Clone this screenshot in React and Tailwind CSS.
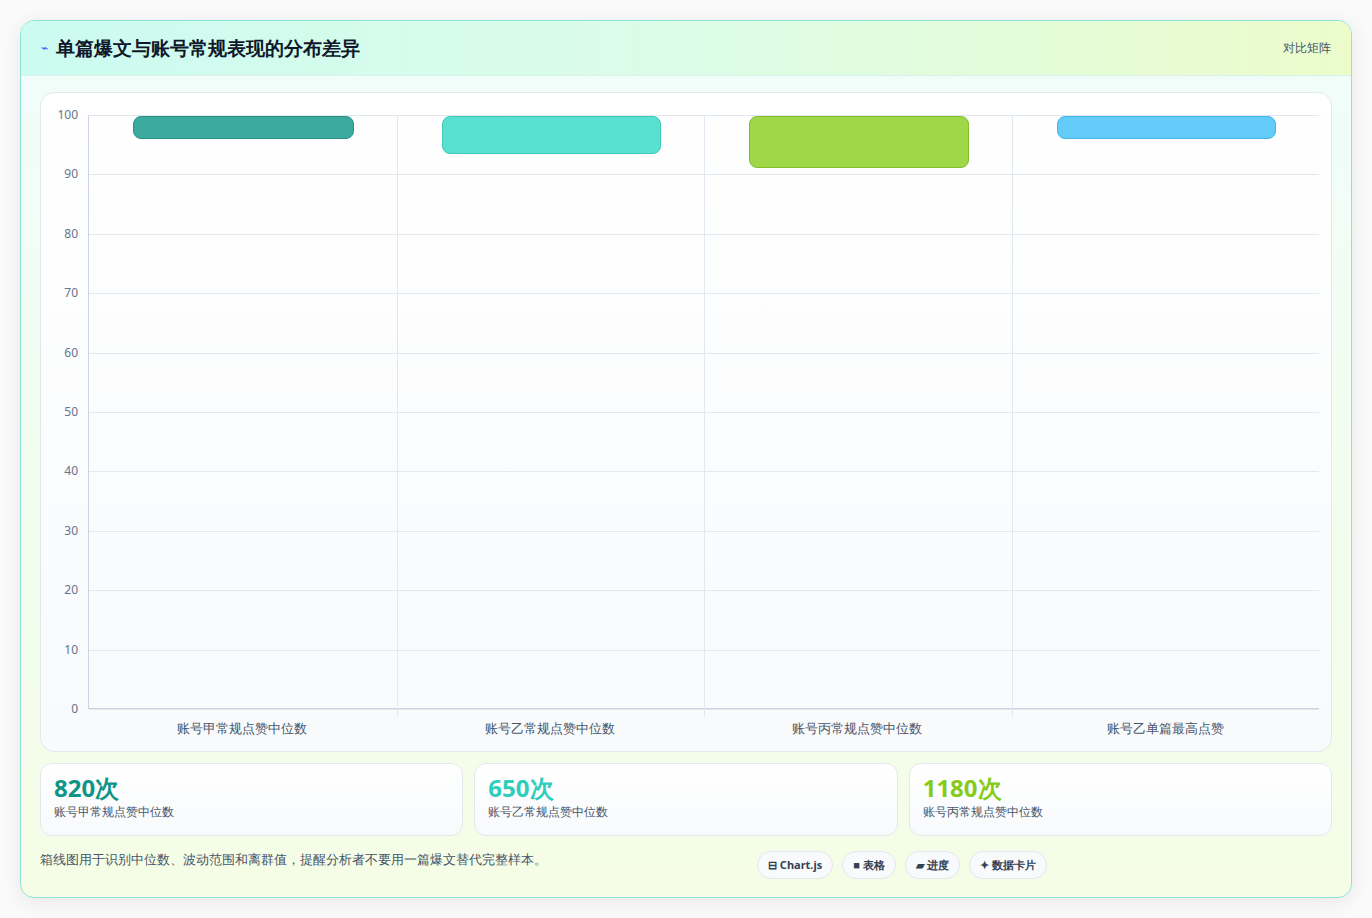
export default function App() {
  const ticks = [100, 90, 80, 70, 60, 50, 40, 30, 20, 10, 0];
  const bars = [
    { label: "账号甲常规点赞中位数", h: 23, bg: "bg-[#3daaa0]", bd: "border-[#2a8f86]" },
    { label: "账号乙常规点赞中位数", h: 38, bg: "bg-[#5ae0d0]", bd: "border-[#3cc9b8]" },
    { label: "账号丙常规点赞中位数", h: 52, bg: "bg-[#9ed848]", bd: "border-[#82be2c]" },
    { label: "账号乙单篇最高点赞", h: 23, bg: "bg-[#62cbf8]", bd: "border-[#45b5e8]" },
  ];
  const stats = [
    { v: "820次", l: "账号甲常规点赞中位数", c: "text-[#0f9488]" },
    { v: "650次", l: "账号乙常规点赞中位数", c: "text-[#2fcdbb]" },
    { v: "1180次", l: "账号丙常规点赞中位数", c: "text-[#84cc16]" },
  ];
  return (
    <div className="w-[1372px] h-[918px] bg-[#fafafa] pt-[20px] pl-[20px] font-['Noto_Sans_CJK_SC',sans-serif]">
      <div className="w-[1332px] h-[878px] rounded-[14px] border border-[#8fe3d6] bg-gradient-to-b from-[#f0fdfa] to-[#f5fde6] shadow-[0_4px_20px_rgba(0,0,0,0.08)] overflow-hidden flex flex-col">
        <div className="h-[55px] flex items-center justify-between px-[20px] bg-gradient-to-r from-[#ccfbf1] via-[#dcfce7] to-[#ecfccb] border-b border-[#d8f3ea]">
          <div className="flex items-center gap-[8px]">
            <span className="text-[#2563eb] text-[12px]">⌁</span>
            <span className="text-[19px] font-bold text-[#0f172a]">单篇爆文与账号常规表现的分布差异</span>
          </div>
          <span className="text-[12px] text-[#475569] font-medium">对比矩阵</span>
        </div>
        <div className="px-[19px] pt-[16px] flex flex-col">
          <div className="h-[660px] rounded-[14px] border border-[#e2e8f0] bg-gradient-to-b from-white to-[#f8fafc] pt-[22px] pr-[12px] flex">
            <div className="w-[47px] relative h-[594px]">
              {ticks.map((t, i) => (
                <span key={t} className="absolute right-[10px] text-[12px] text-[#64748b] font-['Liberation_Sans',sans-serif] leading-none" style={{ top: i * 59.4 - 6 }}>{t}</span>
              ))}
            </div>
            <div className="flex-1 flex flex-col">
              <div className="relative h-[594px] border-l border-b border-[#cbd5e1]">
                {ticks.map((t, i) => (
                  <div key={t} className="absolute left-0 right-0 h-px bg-[#e2e8f0]" style={{ top: i * 59.4 }} />
                ))}
                <div className="absolute inset-0 grid grid-cols-4">
                  {bars.map((b, i) => (
                    <div key={i} className={`relative ${i > 0 ? "border-l border-[#e2e8f0]" : ""} h-[602px]`}>
                      <div className={`absolute left-[44px] right-[43px] top-[1px] rounded-[8px] border ${b.bg} ${b.bd}`} style={{ height: b.h }} />
                    </div>
                  ))}
                </div>
              </div>
              <div className="grid grid-cols-4 pt-[10px]">
                {bars.map((b, i) => (
                  <div key={i} className="text-center text-[13px] text-[#475569] font-medium">{b.label}</div>
                ))}
              </div>
            </div>
          </div>
          <div className="grid grid-cols-3 gap-[11px] mt-[11px]">
            {stats.map((s, i) => (
              <div key={i} className="h-[73px] rounded-[12px] border border-[#e2e8f0] bg-gradient-to-b from-white to-[#f8fafc] px-[13px] pt-[8px]">
                <div className={`text-[24px] font-bold leading-[32px] ${s.c}`}>{s.v}</div>
                <div className="text-[12px] text-[#475569] leading-[16px]">{s.l}</div>
              </div>
            ))}
          </div>
          <div className="flex items-center mt-[15px]">
            <span className="text-[13px] text-[#475569] w-[717px] -mt-[10px]">箱线图用于识别中位数、波动范围和离群值，提醒分析者不要用一篇爆文替代完整样本。</span>
            <div className="flex gap-[9px]">
              {["⊟ Chart.js", "■ 表格", "▰ 进度", "✦ 数据卡片"].map((c) => (
                <span key={c} className="h-[28px] px-[10px] rounded-full border border-[#e2e8f0] bg-[#f8fafc] text-[11px] font-bold text-[#334155] flex items-center">{c}</span>
              ))}
            </div>
          </div>
        </div>
      </div>
    </div>
  );
}
